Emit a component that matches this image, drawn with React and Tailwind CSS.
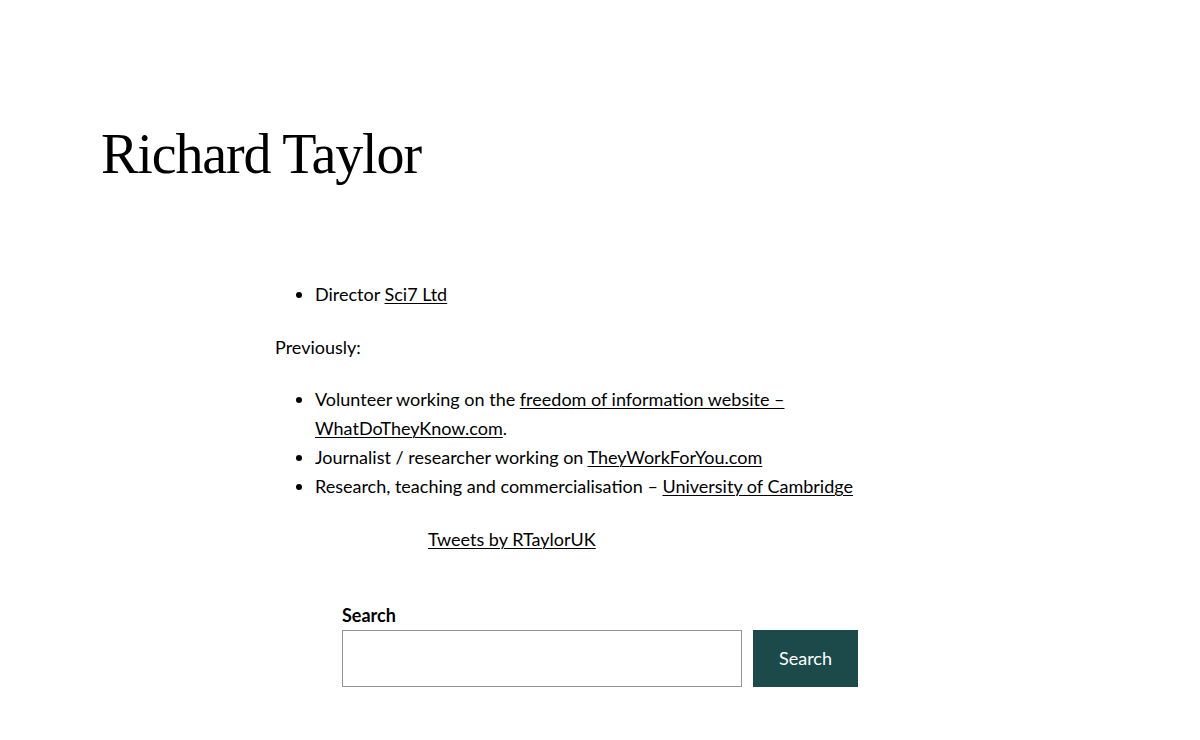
export default function App() {
  const link = "underline underline-offset-2 decoration-1";
  return (
    <div className="min-h-screen bg-white text-black font-['Lato',sans-serif] text-[18px] leading-[29px]">
      <header className="pl-[101px] pt-[126px]">
        <h1 className="font-['Liberation_Serif',serif] text-[56px] leading-none tracking-[-0.02em]">
          Richard Taylor
        </h1>
      </header>

      <main className="w-[650px] mx-auto mt-[98px] flex flex-col gap-6">
        <ul className="list-disc pl-10">
          <li>
            Director <a href="#" className={link}>Sci7 Ltd</a>
          </li>
        </ul>
        <p>Previously:</p>
        <ul className="list-disc pl-10 -mt-px">
          <li>
            Volunteer working on the{" "}
            <a href="#" className={link}>freedom of information website – WhatDoTheyKnow.com</a>.
          </li>
          <li>
            Journalist / researcher working on <a href="#" className={link}>TheyWorkForYou.com</a>
          </li>
          <li>
            Research, teaching and commercialisation – <a href="#" className={link}>University of Cambridge</a>
          </li>
        </ul>
        <div className="pl-[153px]">
          <a href="#" className={link}>Tweets by RTaylorUK</a>
        </div>

        <form className="w-[516px] mx-auto mt-[23px]" onSubmit={(e) => e.preventDefault()}>
          <label className="block font-bold leading-[28px]">Search</label>
          <div className="flex gap-[11px] mt-px">
            <input type="text" className="w-[400px] h-[57px] border border-[#949494] px-3 outline-none" />
            <button type="submit" className="w-[105px] h-[57px] bg-[#1c4a4b] text-white">
              Search
            </button>
          </div>
        </form>
      </main>
    </div>
  );
}
